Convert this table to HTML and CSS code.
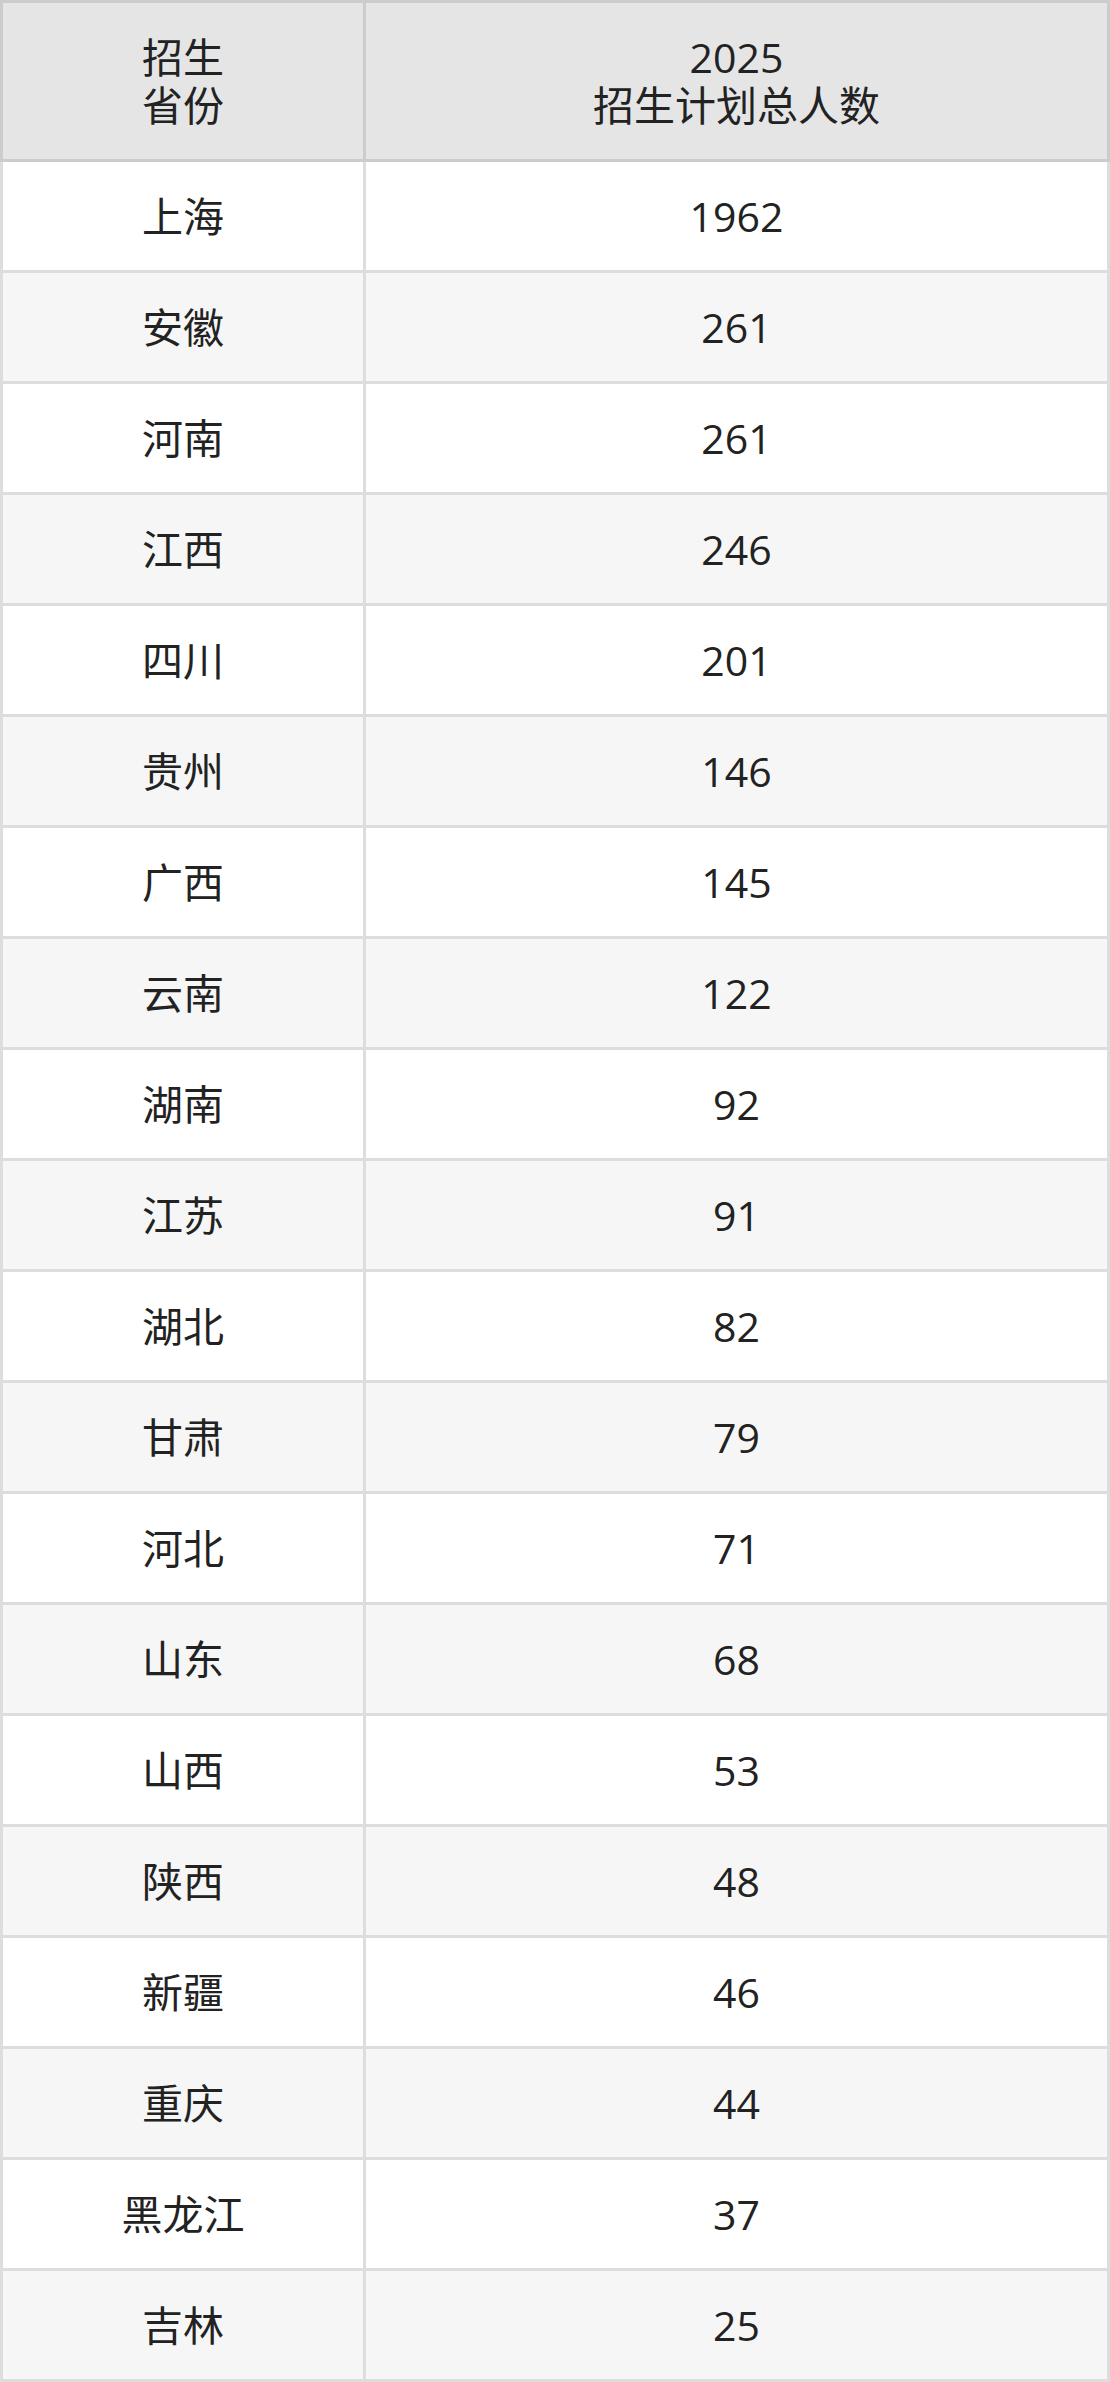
FILE: index.html
```html
<!DOCTYPE html>
<html lang="zh-CN">
<head>
<meta charset="utf-8">
<title>招生计划</title>
<link rel="stylesheet" href="styles.css">
</head>
<body>
<div class="table">
  <div class="row head">
    <div class="cell c1"><span class="lines"><span class="line">招生</span><span class="line">省份</span></span></div>
    <div class="cell c2"><span class="lines"><span class="line">2025</span><span class="line">招生计划总人数</span></span></div>
  </div>
  <div class="row"><div class="cell c1">上海</div><div class="cell c2">1962</div></div>
  <div class="row alt"><div class="cell c1">安徽</div><div class="cell c2">261</div></div>
  <div class="row"><div class="cell c1">河南</div><div class="cell c2">261</div></div>
  <div class="row alt"><div class="cell c1">江西</div><div class="cell c2">246</div></div>
  <div class="row"><div class="cell c1">四川</div><div class="cell c2">201</div></div>
  <div class="row alt"><div class="cell c1">贵州</div><div class="cell c2">146</div></div>
  <div class="row"><div class="cell c1">广西</div><div class="cell c2">145</div></div>
  <div class="row alt"><div class="cell c1">云南</div><div class="cell c2">122</div></div>
  <div class="row"><div class="cell c1">湖南</div><div class="cell c2">92</div></div>
  <div class="row alt"><div class="cell c1">江苏</div><div class="cell c2">91</div></div>
  <div class="row"><div class="cell c1">湖北</div><div class="cell c2">82</div></div>
  <div class="row alt"><div class="cell c1">甘肃</div><div class="cell c2">79</div></div>
  <div class="row"><div class="cell c1">河北</div><div class="cell c2">71</div></div>
  <div class="row alt"><div class="cell c1">山东</div><div class="cell c2">68</div></div>
  <div class="row"><div class="cell c1">山西</div><div class="cell c2">53</div></div>
  <div class="row alt"><div class="cell c1">陕西</div><div class="cell c2">48</div></div>
  <div class="row"><div class="cell c1">新疆</div><div class="cell c2">46</div></div>
  <div class="row alt"><div class="cell c1">重庆</div><div class="cell c2">44</div></div>
  <div class="row"><div class="cell c1">黑龙江</div><div class="cell c2">37</div></div>
  <div class="row alt"><div class="cell c1">吉林</div><div class="cell c2">25</div></div>
</div>
</body>
</html>
```

FILE: styles.css
```css
html, body {
  margin: 0;
  padding: 0;
  background: #fff;
}
body {
  font-family: "Open Sans", "Noto Sans CJK SC", sans-serif;
  font-size: 41px;
  line-height: 48px;
  color: #222;
}
.table {
  width: 1110px;
}
.row {
  display: flex;
  background: #fff;
}
.row.alt {
  background: #f6f6f6;
}
.cell {
  display: flex;
  align-items: center;
  justify-content: center;
  text-align: center;
  box-sizing: border-box;
  height: 111px;
  border-right: 3px solid #ddd;
  border-bottom: 3px solid #ddd;
}
.c1 {
  width: 366px;
  border-left: 3px solid #ddd;
}
.c2 {
  width: 744px;
}
.lines {
  display: flex;
  flex-direction: column;
  align-items: center;
}
.line {
  display: block;
  height: 48px;
}
.head {
  background: #e5e5e5;
}
.head .cell {
  height: 162px;
  border-top: 3px solid #ccc;
  border-right-color: #ccc;
  border-bottom-color: #ccc;
}
.head .c1 {
  border-left-color: #ccc;
}
```
